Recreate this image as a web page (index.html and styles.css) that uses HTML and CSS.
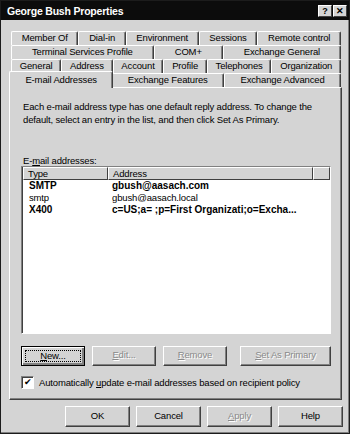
FILE: index.html
```html
<!DOCTYPE html>
<html lang="en">

<head>
    <meta charset="UTF-8">
    <title>George Bush Properties</title>
    <link rel="stylesheet" href="styles.css">
</head>

<body>
    <div class="window">
        <div class="titlebar">
            <span class="title">George Bush Properties</span>
            <span class="cap-btns">
                <span class="cap-btn">?</span>
                <span class="cap-btn">&#x2715;</span>
            </span>
        </div>

        <div class="client">
            <div class="tabs">
                <div class="tab-row">
                    <span class="tab">Member Of</span>
                    <span class="tab">Dial-in</span>
                    <span class="tab">Environment</span>
                    <span class="tab">Sessions</span>
                    <span class="tab">Remote control</span>
                </div>
                <div class="tab-row">
                    <span class="tab">Terminal Services Profile</span>
                    <span class="tab">COM+</span>
                    <span class="tab">Exchange General</span>
                </div>
                <div class="tab-row">
                    <span class="tab">General</span>
                    <span class="tab">Address</span>
                    <span class="tab">Account</span>
                    <span class="tab">Profile</span>
                    <span class="tab">Telephones</span>
                    <span class="tab">Organization</span>
                </div>
                <div class="tab-row">
                    <span class="tab active">E-mail Addresses</span>
                    <span class="tab">Exchange Features</span>
                    <span class="tab">Exchange Advanced</span>
                </div>
            </div>

            <div class="panel">
                <p class="intro">Each e-mail address type has one default reply address. To change the default, select an entry in the list, and then click Set As Primary.</p>

                <div class="list-label">E-<u>m</u>ail addresses:</div>
                <div class="listbox">
                    <div class="list-head">
                        <span class="col-type">Type</span>
                        <span class="col-addr">Address</span>
                        <span class="col-rest"></span>
                    </div>
                    <div class="list-row primary">
                        <span class="col-type">SMTP</span>
                        <span class="col-addr">gbush@aasach.com</span>
                    </div>
                    <div class="list-row">
                        <span class="col-type">smtp</span>
                        <span class="col-addr">gbush@aasach.local</span>
                    </div>
                    <div class="list-row primary">
                        <span class="col-type">X400</span>
                        <span class="col-addr">c=US;a= ;p=First Organizati;o=Excha...</span>
                    </div>
                </div>

                <div class="btn-row">
                    <span class="btn default"><span class="focus"><u>N</u>ew...</span></span>
                    <span class="btn disabled"><u>E</u>dit...</span>
                    <span class="btn disabled"><u>R</u>emove</span>
                    <span class="btn disabled wide"><u>S</u>et As Primary</span>
                </div>

                <div class="check-row">
                    <span class="checkbox">&#x2714;</span>
                    <span>Automatically <u>u</u>pdate e-mail addresses based on recipient policy</span>
                </div>
            </div>

            <div class="dialog-btns">
                <span class="btn">OK</span>
                <span class="btn">Cancel</span>
                <span class="btn disabled"><u>A</u>pply</span>
                <span class="btn">Help</span>
            </div>
        </div>
    </div>
</body>

</html>
```

FILE: styles.css
```css
* {
    margin: 0;
    padding: 0;
    box-sizing: border-box;
}

body {
    font-family: 'Liberation Sans', Arial, sans-serif;
    font-size: 9.5px;
    letter-spacing: -0.15px;
    color: #000;
    background: #fff;
}

.window {
    width: 350px;
    height: 434px;
    background: #d4d4d4;
    border: 1px solid #1c1c1c;
    box-shadow: inset -1px -1px 0 #808080;
    display: flex;
    flex-direction: column;
}

/* Title bar */
.titlebar {
    height: 19px;
    background: #0c0c0c;
    color: #fff;
    display: flex;
    align-items: center;
    justify-content: space-between;
    padding: 0 2px 0 6px;
}

.title {
    font-weight: bold;
    font-size: 10.5px;
    letter-spacing: -0.2px;
}

.cap-btns {
    display: flex;
    gap: 1px;
}

.cap-btn {
    width: 14px;
    height: 12px;
    background: #d4d4d4;
    color: #000;
    font-weight: bold;
    font-size: 9px;
    letter-spacing: 0;
    line-height: 11px;
    text-align: center;
    border: 1px solid;
    border-color: #fff #404040 #404040 #fff;
}

.client {
    flex: 1;
    padding: 11px 7px 0 8px;
    display: flex;
    flex-direction: column;
}

/* Tabs */
.tabs {
    padding: 0 1px 0 2px;
}

.tab-row {
    display: flex;
    height: 14px;
}

.tab {
    flex: 1 1 auto;
    text-align: center;
    line-height: 12px;
    padding: 0 4px;
    white-space: nowrap;
    border-top: 1px solid #fff;
    border-left: 1px solid #fff;
    border-right: 1px solid #404040;
    box-shadow: inset -1px 0 0 #808080;
    border-radius: 2px 2px 0 0;
}

.tab.active {
    position: relative;
    z-index: 1;
    height: 17px;
    margin: -2px -2px -1px -2px;
    line-height: 15px;
    background: #d4d4d4;
}

.panel {
    height: 313px;
    border: 1px solid;
    border-color: #fff #404040 #404040 #fff;
    box-shadow: inset -1px -1px 0 #808080;
    padding: 12px 10px 0 13px;
}

.intro {
    line-height: 13px;
    padding-right: 4px;
}

.list-label {
    margin-top: 29px;
    line-height: 11px;
}

/* List view */
.listbox {
    margin-left: -2px;
    width: 310px;
    height: 168px;
    background: #fff;
    border: 1px solid;
    border-color: #808080 #fff #fff #808080;
    box-shadow: inset 1px 1px 0 #404040;
    padding: 0 0 0 1px;
}

.list-head {
    display: flex;
    height: 13px;
    line-height: 11px;
}

.list-head span {
    background: #d4d4d4;
    border: 1px solid;
    border-color: #fff #404040 #404040 #fff;
    padding-left: 4px;
}

.list-head .col-type {
    width: 85px;
}

.list-head .col-addr {
    width: 205px;
}

.list-head .col-rest {
    flex: 1;
}

.list-row {
    display: flex;
    line-height: 12px;
}

.list-row .col-type {
    width: 85px;
    padding-left: 6px;
}

.list-row .col-addr {
    padding-left: 4px;
    white-space: nowrap;
}

.list-row.primary {
    font-size: 10px;
    font-weight: bold;
    letter-spacing: 0;
}

/* Buttons */
.btn-row {
    display: flex;
    gap: 7px;
    margin-top: 12px;
    margin-left: -2px;
    width: 310px;
}

.btn {
    width: 64px;
    height: 20px;
    line-height: 16px;
    text-align: center;
    background: #d4d4d4;
    border: 1px solid;
    border-color: #fff #404040 #404040 #fff;
    box-shadow: inset -1px -1px 0 #808080;
    white-space: nowrap;
}

.btn.wide {
    width: 91px;
    margin-left: auto;
}

.btn.disabled {
    color: #8a8a8a;
    text-shadow: 1px 1px 0 #fff;
}

.btn.default {
    border: 1px solid #000;
    box-shadow: inset 1px 1px 0 #fff, inset -2px -2px 0 #808080, inset -1px -1px 0 #404040;
    padding: 3px;
    line-height: 12px;
}

.focus {
    display: block;
    border: 1px dotted #000;
    height: 12px;
    line-height: 10px;
}

.check-row {
    display: flex;
    align-items: center;
    gap: 5px;
    margin-top: 10px;
    margin-left: -2px;
}

.checkbox {
    width: 13px;
    height: 13px;
    background: #fff;
    border: 1px solid;
    border-color: #808080 #fff #fff #808080;
    box-shadow: inset 1px 1px 0 #404040;
    font-size: 9px;
    letter-spacing: 0;
    line-height: 11px;
    text-align: center;
}

.dialog-btns {
    display: flex;
    justify-content: flex-end;
    gap: 6px;
    margin-top: 6px;
    margin-right: -1px;
}

.dialog-btns .btn {
    width: 65px;
    height: 21px;
    line-height: 17px;
}
```
